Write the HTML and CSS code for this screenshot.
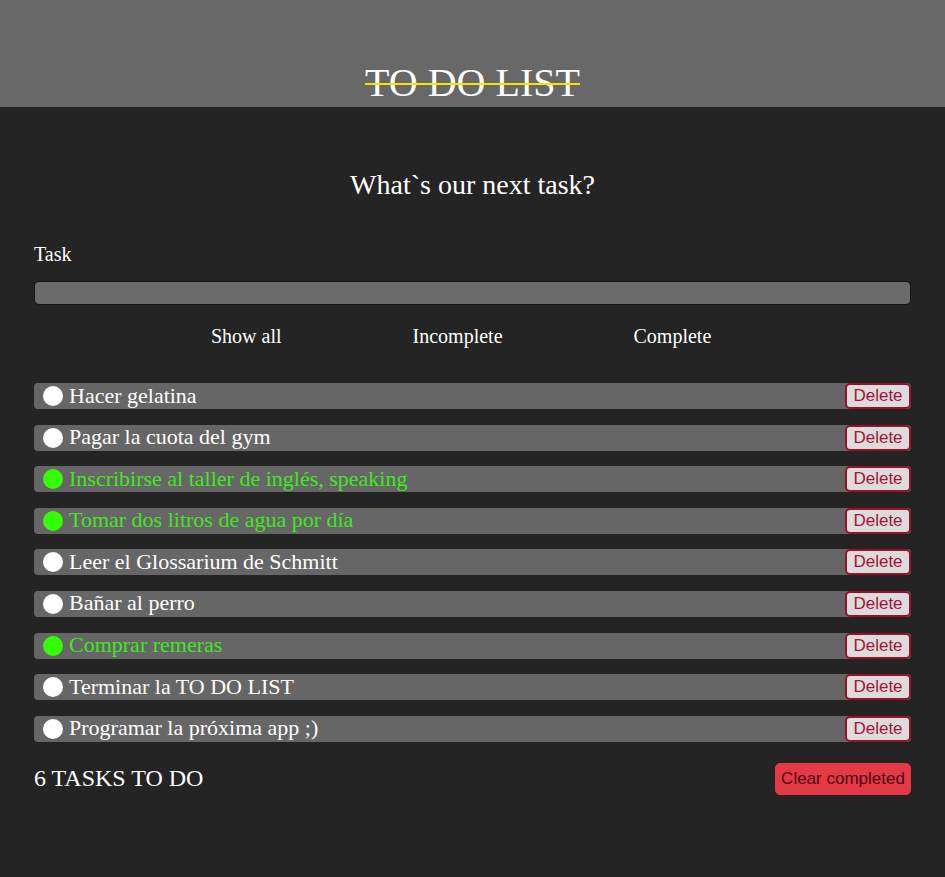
FILE: index.html
```html
<!DOCTYPE html>
<html lang="es">
<head>
<meta charset="utf-8">
<title>TO DO LIST</title>
<link rel="stylesheet" href="styles.css">
</head>
<body>
<header class="header">
  <h1 class="title">TO DO LIST</h1>
</header>
<main class="main">
  <h2 class="subtitle">What`s our next task?</h2>
  <label class="label" for="task">Task</label>
  <input class="input" id="task" type="text">
  <nav class="filters">
    <span class="filter">Show all</span>
    <span class="filter">Incomplete</span>
    <span class="filter">Complete</span>
  </nav>
  <ul class="list">
    <li class="item"><span class="dot"></span><span class="text">Hacer gelatina</span><button class="delete">Delete</button></li>
    <li class="item"><span class="dot"></span><span class="text">Pagar la cuota del gym</span><button class="delete">Delete</button></li>
    <li class="item done"><span class="dot"></span><span class="text">Inscribirse al taller de inglés, speaking</span><button class="delete">Delete</button></li>
    <li class="item done"><span class="dot"></span><span class="text">Tomar dos litros de agua por día</span><button class="delete">Delete</button></li>
    <li class="item"><span class="dot"></span><span class="text">Leer el Glossarium de Schmitt</span><button class="delete">Delete</button></li>
    <li class="item"><span class="dot"></span><span class="text">Bañar al perro</span><button class="delete">Delete</button></li>
    <li class="item done"><span class="dot"></span><span class="text">Comprar remeras</span><button class="delete">Delete</button></li>
    <li class="item"><span class="dot"></span><span class="text">Terminar la TO DO LIST</span><button class="delete">Delete</button></li>
    <li class="item"><span class="dot"></span><span class="text">Programar la próxima app ;)</span><button class="delete">Delete</button></li>
  </ul>
  <footer class="footer">
    <span class="count">6 TASKS TO DO</span>
    <button class="clear">Clear completed</button>
  </footer>
</main>
</body>
</html>
```

FILE: styles.css
```css
* { box-sizing: border-box; }
html, body { margin: 0; padding: 0; }
body {
  background: #242424;
  color: #fff;
  font-family: "Liberation Serif", "Times New Roman", serif;
  min-height: 877px;
}
.header {
  background: #686868;
  height: 107px;
  padding-top: 60px;
  text-align: center;
}
.title {
  margin: 0;
  font-size: 40px;
  font-weight: normal;
  line-height: 46px;
  text-decoration: line-through;
  text-decoration-color: #f2e600;
  text-decoration-thickness: 2px;
}
.main {
  padding: 0 34px;
  display: flex;
  flex-direction: column;
}
.subtitle {
  margin: 62px 0 0;
  font-size: 28px;
  font-weight: normal;
  line-height: 32px;
  text-align: center;
}
.label {
  margin-top: 42px;
  font-size: 20px;
  line-height: 23px;
}
.input {
  margin-top: 15px;
  height: 24px;
  background: #6b6b6b;
  border: 1px solid #141414;
  border-radius: 5px;
  outline: none;
}
.filters {
  margin-top: 20px;
  padding-left: 177px;
  display: flex;
  gap: 131px;
  font-size: 20px;
  line-height: 23px;
}
.list {
  list-style: none;
  margin: 35px 0 0;
  padding: 0;
  display: flex;
  flex-direction: column;
  gap: 15.6px;
}
.item {
  height: 26px;
  background: #666;
  border-radius: 4px;
  display: flex;
  align-items: center;
  padding-left: 9px;
  font-size: 22px;
}
.dot {
  width: 20px;
  height: 20px;
  border-radius: 50%;
  background: #fff;
  flex: none;
}
.text {
  margin-left: 6px;
  flex: 1;
  line-height: 25px;
  padding-bottom: 2px;
}
.done { color: #41e81f; }
.done .dot { background: #33ff00; }
.delete {
  height: 26px;
  width: 66px;
  padding: 0;
  background: #dcdcdc;
  border: 2px solid #9b0f2c;
  border-radius: 5px;
  color: #a8123a;
  font-family: "Liberation Sans", Arial, sans-serif;
  font-size: 17px;
  line-height: 20px;
}
.footer {
  margin-top: 21px;
  height: 32px;
  display: flex;
  align-items: center;
  justify-content: space-between;
}
.count {
  font-size: 24px;
}
.clear {
  height: 32px;
  width: 136px;
  padding: 0;
  background: #e63946;
  border: 1px solid #e63946;
  border-radius: 5px;
  color: #4a0710;
  font-family: "Liberation Sans", Arial, sans-serif;
  font-size: 17px;
}
```
